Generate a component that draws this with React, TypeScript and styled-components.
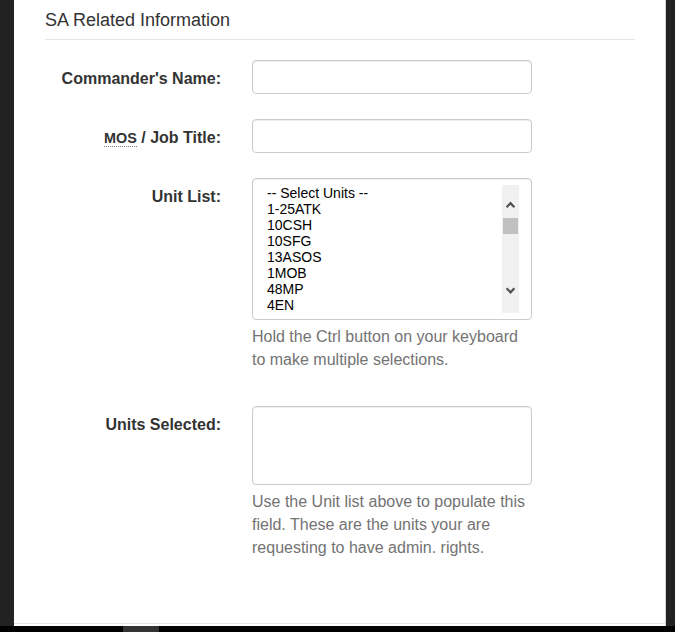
import React from 'react';
import styled, { createGlobalStyle } from 'styled-components';

const GlobalStyle = createGlobalStyle`
  html, body {
    margin: 0;
    padding: 0;
    background-color: #000;
  }
  * {
    box-sizing: border-box;
  }
`;

const Screen = styled.div`
  display: grid;
  grid-template-rows: 626px 6px;
  width: 675px;
  height: 632px;
  overflow: hidden;
  font-family: "Liberation Sans", Arial, sans-serif;
`;

const Stage = styled.div`
  display: flex;
  background-color: #222;
  overflow: hidden;
`;

const Backdrop = styled.div<{ $width: number }>`
  flex: 0 0 ${props => props.$width}px;
  background-color: #222;
`;

const Panel = styled.section`
  flex: 0 0 652px;
  display: flex;
  flex-direction: column;
  background-color: #fff;
  border-right: 1px solid #d4d4d4;
`;

const Body = styled.div`
  flex: 1;
  padding: 7px 30px 0 31px;
`;

const Legend = styled.h4`
  margin: 0 0 20px;
  padding-bottom: 6px;
  font-size: 18px;
  font-weight: 400;
  line-height: 26px;
  color: #333;
  border-bottom: 1px solid #e5e5e5;
`;

const FormGroup = styled.div`
  display: grid;
  grid-template-columns: 176px 280px;
  column-gap: 31px;
  margin-bottom: 25px;
`;

const Label = styled.label`
  padding-top: 7px;
  text-align: right;
  font-size: 16px;
  font-weight: 700;
  line-height: 23px;
  color: #333;
`;

const Abbr = styled.abbr`
  font-size: 90%;
  text-transform: uppercase;
  text-decoration: none;
  border-bottom: 1px dotted #777;
  cursor: help;
`;

const Field = styled.div`
  display: flex;
  flex-direction: column;
`;

const TextInput = styled.input`
  width: 280px;
  height: 34px;
  padding: 6px 12px;
  border: 1px solid #ccc;
  border-radius: 4px;
  box-shadow: inset 0 1px 1px rgba(0, 0, 0, 0.075);
  font: 16px "Liberation Sans", Arial, sans-serif;
  color: #555;
  outline: none;
`;

const TextArea = styled.textarea`
  width: 280px;
  height: 79px;
  padding: 6px 12px;
  border: 1px solid #ccc;
  border-radius: 4px;
  box-shadow: inset 0 1px 1px rgba(0, 0, 0, 0.075);
  font: 16px "Liberation Sans", Arial, sans-serif;
  resize: none;
  outline: none;
`;

const ListBox = styled.div`
  display: flex;
  width: 280px;
  height: 142px;
  padding: 6px 12px;
  border: 1px solid #ccc;
  border-radius: 4px;
  box-shadow: inset 0 1px 1px rgba(0, 0, 0, 0.075);
`;

const Options = styled.ul`
  flex: 1;
  margin: 0;
  padding: 0;
  list-style: none;
  overflow: hidden;
`;

const Option = styled.li`
  padding: 0 2px;
  font-size: 14px;
  line-height: 16px;
  color: #000;
  white-space: nowrap;
`;

const HelpBlock = styled.p`
  margin: 5px 0 10px;
  font-size: 16px;
  line-height: 23px;
  color: #737373;
`;

const Footer = styled.div`
  height: 3px;
  border-top: 1px solid #e5e5e5;
`;

const TaskBar = styled.div`
  display: flex;
  padding-left: 123px;
  background-color: #000;
`;

const TaskItem = styled.div`
  width: 36px;
  background-color: #333;
`;

const units = ['-- Select Units --', '1-25ATK', '10CSH', '10SFG', '13ASOS', '1MOB', '48MP', '4EN'];

const ScrollBar = () => (
  <svg width="17" height="128" viewBox="0 0 17 128">
    <rect x="0" y="0" width="17" height="128" fill="#f1f1f1" />
    <path d="M4.6 22.2 L8.5 18.2 L12.4 22.2" fill="none" stroke="#505050" strokeWidth="2.2" />
    <rect x="1" y="33" width="15" height="16" fill="#c1c1c1" />
    <path d="M4.6 103.3 L8.5 107.3 L12.4 103.3" fill="none" stroke="#505050" strokeWidth="2.2" />
  </svg>
);

const App: React.FC = () => {
  return (
    <Screen>
      <GlobalStyle />
      <Stage>
        <Backdrop $width={14} />
        <Panel>
          <Body>
            <Legend>SA Related Information</Legend>

            <FormGroup>
              <Label htmlFor="cmdrName">Commander's Name:</Label>
              <Field>
                <TextInput id="cmdrName" type="text" />
              </Field>
            </FormGroup>

            <FormGroup>
              <Label htmlFor="jobTitle">
                <Abbr title="Military Occupational Specialty">MOS</Abbr> / Job Title:
              </Label>
              <Field>
                <TextInput id="jobTitle" type="text" />
              </Field>
            </FormGroup>

            <FormGroup>
              <Label>Unit List:</Label>
              <Field>
                <ListBox role="listbox" aria-multiselectable="true">
                  <Options>
                    {units.map(unit => (
                      <Option key={unit} role="option">{unit}</Option>
                    ))}
                  </Options>
                  <ScrollBar />
                </ListBox>
                <HelpBlock>Hold the Ctrl button on your keyboard to make multiple selections.</HelpBlock>
              </Field>
            </FormGroup>

            <FormGroup>
              <Label htmlFor="unitsSelected">Units Selected:</Label>
              <Field>
                <TextArea id="unitsSelected" />
                <HelpBlock>
                  Use the Unit list above to populate this field. These are the units your are
                  requesting to have admin. rights.
                </HelpBlock>
              </Field>
            </FormGroup>
          </Body>
          <Footer />
        </Panel>
        <Backdrop $width={9} />
      </Stage>
      <TaskBar>
        <TaskItem />
      </TaskBar>
    </Screen>
  );
};

export default App;
